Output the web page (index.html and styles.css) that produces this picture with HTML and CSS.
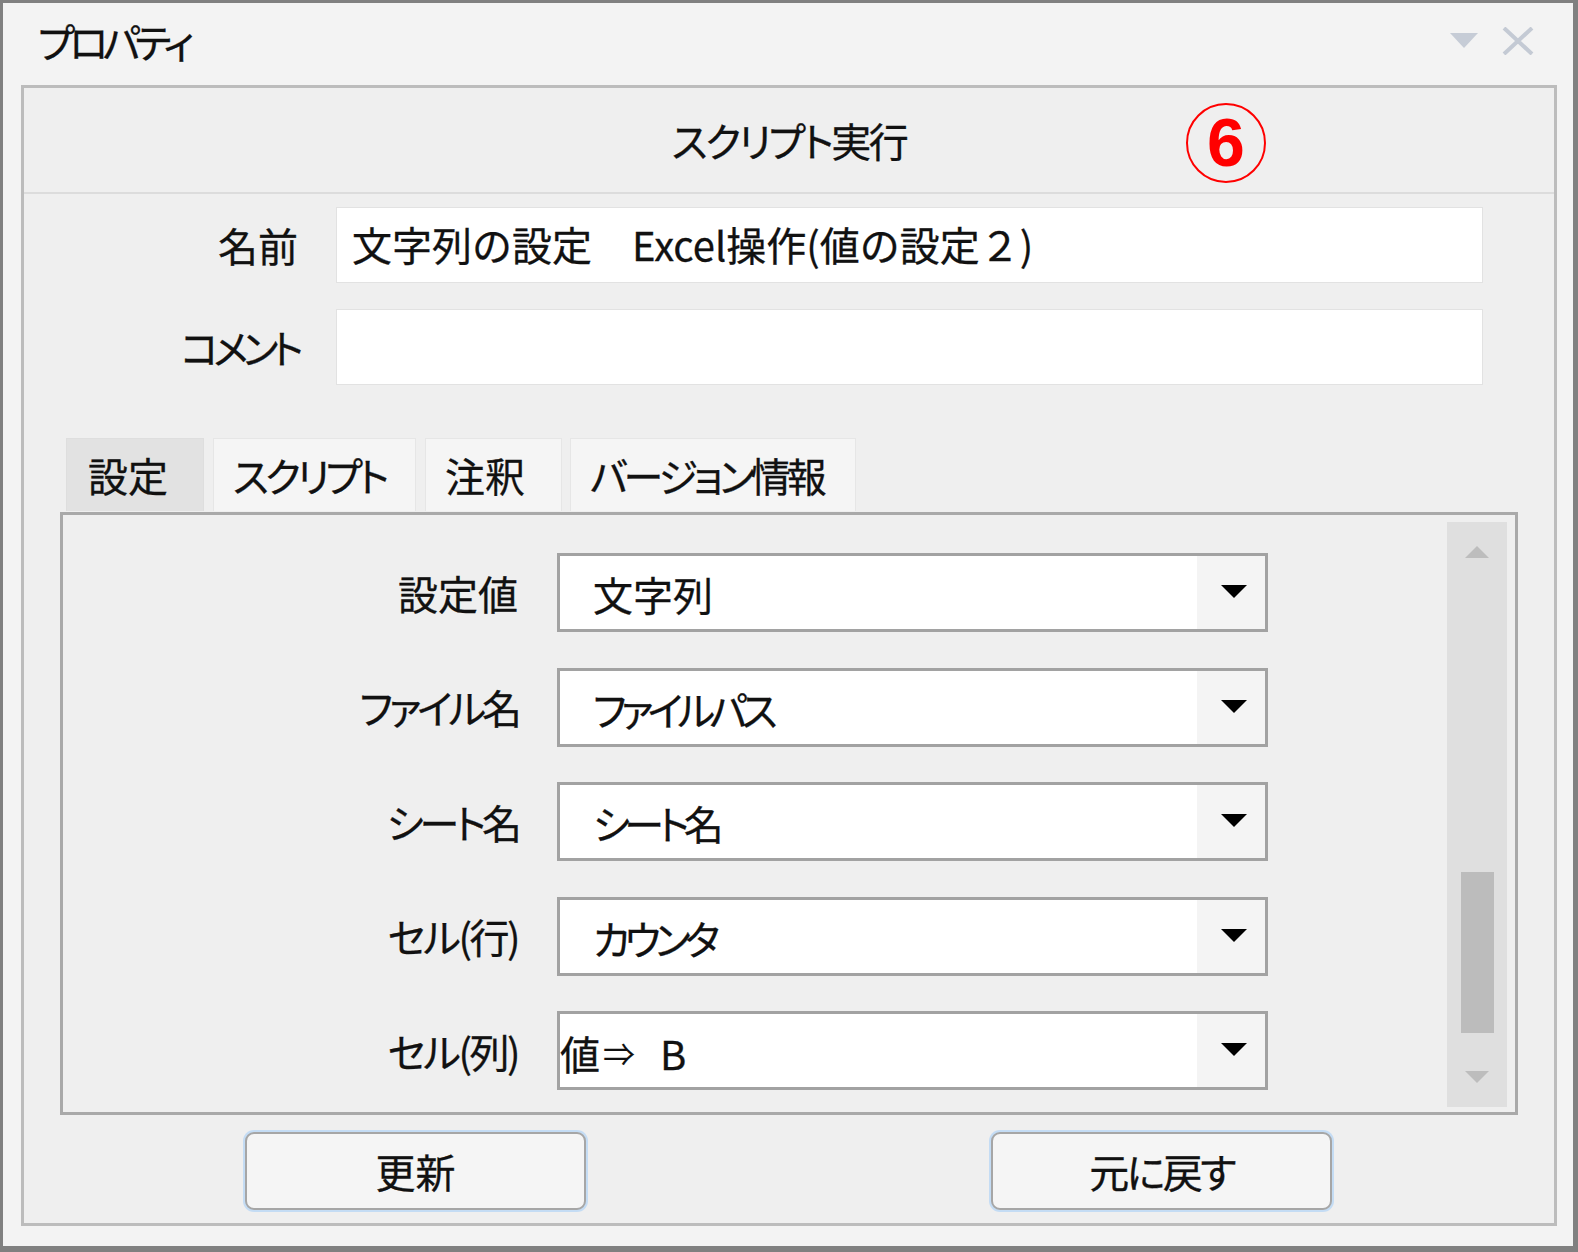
FILE: index.html
```html
<!DOCTYPE html>
<html lang="ja">
<head>
  <meta charset="UTF-8">
  <title>プロパティ</title>
  <link rel="stylesheet" href="styles.css">
</head>
<body>
  <div class="window">
    <div class="titlebar">
      <span class="title narrow-x">プロパティ</span>
      <div class="controls">
        <span class="menu-arrow"></span>
        <svg class="close" width="32" height="28" viewBox="0 0 32 28">
          <path d="M2 1 L30 27 M30 1 L2 27" stroke="#c4cad4" stroke-width="4" fill="none"/>
        </svg>
      </div>
    </div>

    <div class="panel">
      <div class="panel-head">
        <span class="narrow-s">スクリプト実行</span>
        <span class="marker">6</span>
      </div>

      <div class="form">
        <label>名前</label>
        <div class="textbox">文字列の設定　Excel操作(値の設定２)</div>
        <label class="narrow-x">コメント</label>
        <div class="textbox"></div>
      </div>

      <div class="tabs">
        <div class="tab tab-settings active">設定</div>
        <div class="tab tab-script narrow">スクリプト</div>
        <div class="tab tab-note">注釈</div>
        <div class="tab tab-version narrow">バージョン情報</div>
      </div>

      <div class="tab-body">
        <div class="rows">
          <div class="row">
            <label>設定値</label>
            <div class="combo"><span class="value">文字列</span><span class="drop"></span></div>
          </div>
          <div class="row">
            <label class="narrow">ファイル名</label>
            <div class="combo"><span class="value narrow-x">ファイルパス</span><span class="drop"></span></div>
          </div>
          <div class="row">
            <label class="narrow">シート名</label>
            <div class="combo"><span class="value narrow-x">シート名</span><span class="drop"></span></div>
          </div>
          <div class="row">
            <label class="narrow-s">セル(行)</label>
            <div class="combo"><span class="value narrow-x">カウンタ</span><span class="drop"></span></div>
          </div>
          <div class="row">
            <label class="narrow-s">セル(列)</label>
            <div class="combo"><span class="value flush">値<span class="arrow">⇒</span> B</span><span class="drop"></span></div>
          </div>
        </div>
        <div class="scrollbar">
          <div class="sb-btn"><span class="sb-up"></span></div>
          <div class="sb-track"><div class="sb-thumb"></div></div>
          <div class="sb-btn"><span class="sb-down"></span></div>
        </div>
      </div>

      <div class="actions">
        <button>更新</button>
        <button class="narrow-s">元に戻す</button>
      </div>
    </div>
  </div>
</body>
</html>
```
FILE: styles.css
```css
body {
  margin: 0;
  font-family: "Noto Sans CJK JP", "Noto Sans", sans-serif;
  font-feature-settings: "palt";
  color: #111;
  -webkit-text-stroke: 0.3px #111;
  background: #f3f3f3;
}
/* Meiryo UI has narrow kana, Noto does not */
.narrow-s { letter-spacing: -2.5px; }
.narrow { letter-spacing: -4px; }
.narrow-x { letter-spacing: -5.5px; }

.window {
  width: 1578px;
  height: 1252px;
  box-sizing: border-box;
  border: solid #808080;
  border-width: 3px 5px 6px 3px;
  background: #f3f3f3;
}
.titlebar {
  height: 82px;
  display: flex;
  align-items: center;
  justify-content: space-between;
  padding: 0 39px 0 35px;
}
.title {
  font-size: 40px;
  margin-top: -6px;
}
.controls {
  display: flex;
  align-items: center;
  gap: 24px;
  margin-top: -7px;
}
.menu-arrow {
  width: 0;
  height: 0;
  border-left: 14px solid transparent;
  border-right: 14px solid transparent;
  border-top: 15px solid #c6ccd6;
}
.panel {
  margin: 0 16px 0 18px;
  border: 3px solid #bcbcbc;
  background: #efefef;
  padding-bottom: 13px;
}
.panel-head {
  position: relative;
  height: 104px;
  border-bottom: 2px solid #dcdcdc;
  display: flex;
  align-items: center;
  justify-content: center;
  font-size: 40px;
}
.marker {
  position: absolute;
  left: 1162px;
  top: 15px;
  width: 80px;
  height: 80px;
  box-sizing: border-box;
  border: 2.5px solid #ff0000;
  border-radius: 50%;
  color: #ff0000;
  -webkit-text-stroke: 0;
  font-family: "Liberation Sans", sans-serif;
  font-weight: bold;
  font-size: 68px;
  line-height: 75px;
  text-align: center;
}
.form {
  display: grid;
  grid-template-columns: 274px 1147px;
  column-gap: 38px;
  row-gap: 26px;
  padding-top: 13px;
  align-items: center;
}
.form label {
  text-align: right;
  font-size: 40px;
}
.textbox {
  height: 76px;
  box-sizing: border-box;
  background: #fff;
  border: 1px solid #e2e2e2;
  padding-left: 15px;
  font-size: 40px;
  font-feature-settings: normal;
  line-height: 72px;
  white-space: nowrap;
}
.tabs {
  display: flex;
  margin: 53px 0 0 42px;
}
.tab {
  height: 73px;
  box-sizing: border-box;
  padding-left: 19px;
  margin-right: 9px;
  background: #f5f5f5;
  border: 1px solid #e6e6e6;
  border-bottom: none;
  font-size: 40px;
  line-height: 72px;
  white-space: nowrap;
}
.tab.active {
  background: #e2e2e2;
  border-color: #dedede;
  padding-left: 21px;
}
.tab-settings { width: 138px; }
.tab-script { width: 203px; }
.tab-note { width: 137px; margin-right: 8px; }
.tab-version { width: 286px; }
.tab-body {
  margin: 1px 36px 0 36px;
  height: 603px;
  box-sizing: border-box;
  border: 3px solid #a9a9a9;
  display: flex;
}
.rows {
  flex: 1;
  padding-top: 38px;
  display: flex;
  flex-direction: column;
  gap: 35.5px;
}
.row {
  display: flex;
  align-items: center;
}
.row label {
  width: 455px;
  text-align: right;
  font-size: 40px;
  margin-right: 39px;
}
.combo {
  width: 711px;
  height: 79px;
  box-sizing: border-box;
  border: 3px solid #a2a2a2;
  background: #fff;
  display: flex;
}
.value {
  flex: 1;
  padding-left: 33px;
  font-size: 40px;
  line-height: 76px;
  white-space: nowrap;
}
.value.flush {
  padding-left: 0;
}
.arrow {
  font-size: 32px;
  margin: 0 16px 0 3px;
  vertical-align: 4px;
  -webkit-text-stroke: 0;
}
.drop {
  width: 68px;
  background: #f4f4f4;
  display: flex;
  align-items: center;
  justify-content: center;
}
.drop::after {
  content: "";
  border-left: 13.5px solid transparent;
  border-right: 13.5px solid transparent;
  border-top: 13px solid #000;
  margin-left: 6px;
  margin-top: -2px;
}
.scrollbar {
  width: 60px;
  margin: 7px 8px 5px 0;
  background: #dfdfdf;
  display: flex;
  flex-direction: column;
}
.sb-btn {
  height: 60px;
  display: flex;
  align-items: center;
  justify-content: center;
}
.sb-up, .sb-down {
  width: 0;
  height: 0;
  border-left: 12.5px solid transparent;
  border-right: 12.5px solid transparent;
}
.sb-up {
  border-bottom: 12px solid #bdbdbd;
}
.sb-down {
  border-top: 12px solid #bdbdbd;
}
.sb-track {
  flex: 1;
}
.sb-thumb {
  width: 33px;
  height: 161px;
  margin: 290px 0 0 14px;
  background: #bcbcbc;
}
.actions {
  display: flex;
  gap: 405px;
  margin-top: 17px;
  padding-left: 221px;
}
.actions button {
  width: 341px;
  height: 78px;
  background: #f5f5f5;
  border: 2px solid #a6a6a6;
  border-radius: 9px;
  box-shadow: 0 0 0 2px #c4dcf4;
  font-family: inherit;
  font-feature-settings: "palt";
  font-size: 40px;
  color: #111;
  -webkit-text-stroke: 0.3px #111;
}
```
